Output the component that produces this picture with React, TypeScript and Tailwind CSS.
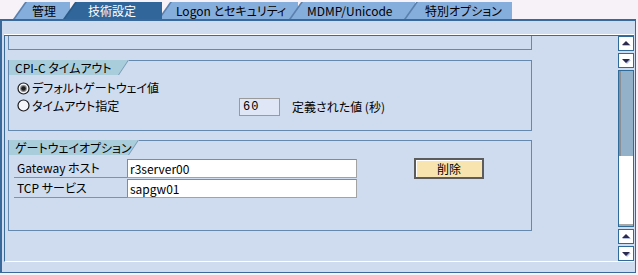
import React from 'react';

const slantLeft = '[clip-path:polygon(12px_0,100%_0,100%_100%,0_100%)]';

const Tab: React.FC<{ label: string; className: string; pad: string; active?: boolean }> = ({ label, className, pad, active }) => (
  <div className={`${className} h-[17px] flex ${active ? 'bg-[#2a5a88] z-10' : 'bg-[#5a80ad]'} ${slantLeft}`}>
    <div
      className={`flex-1 ml-[2px] flex items-center ${pad} text-[12px] leading-none ${slantLeft} ${
        active ? 'bg-[#30669a] text-white' : 'bg-[#86aedd] text-black'
      }`}
    >
      <span className="whitespace-nowrap">{label}</span>
    </div>
  </div>
);

const GroupLabel: React.FC<{ label: string; width: string }> = ({ label, width }) => (
  <div className={`${width} h-full flex bg-[#7899b6] [clip-path:polygon(0_0,100%_0,calc(100%-10px)_100%,0_100%)]`}>
    <div className="flex-1 mr-[1px] bg-[#aacddc] flex items-center pl-[6px] text-[12px] leading-none [clip-path:polygon(0_0,100%_0,calc(100%-10px)_100%,0_100%)]">
      <span className="whitespace-nowrap">{label}</span>
    </div>
  </div>
);

const Radio: React.FC<{ checked?: boolean }> = ({ checked }) => (
  <svg width="13" height="13" viewBox="0 0 13 13" className="shrink-0">
    <circle cx="6.5" cy="6.5" r="5.5" fill="#f4f6fb" stroke="#1a1a1a" strokeWidth="1.2" />
    {checked && <circle cx="6.5" cy="6.5" r="3.4" fill="#8a8a8a" />}
    {checked && <circle cx="6.5" cy="6.5" r="2.3" fill="#1e1e1e" />}
  </svg>
);

const ScrollBtn: React.FC<{ dir: 'up' | 'down' }> = ({ dir }) => (
  <div className="h-[15px] w-[16px] border border-[#2f6a98] bg-white flex items-center justify-center">
    <svg width="14" height="13" viewBox="0 0 14 13">
      {dir === 'up' ? (
        <>
          <polygon points="3,9 12,9 7.5,5" fill="#b4bfe2" />
          <polygon points="3,8 11,8 7,4" fill="#2b2b4f" />
        </>
      ) : (
        <>
          <polygon points="4,6 12,6 8,10" fill="#b4bfe2" />
          <polygon points="3,5 11,5 7,9" fill="#2b2b4f" />
        </>
      )}
    </svg>
  </div>
);

const App: React.FC = () => {
  return (
    <div className="w-[638px] h-[275px] overflow-hidden bg-[#f7f2f7] font-['Noto_Sans_CJK_JP',sans-serif] [font-feature-settings:'palt'] text-black">
      {/* tabs */}
      <div className="h-[19px] flex items-end pl-[13px]">
        <Tab label="管理" className="w-[57px]" pad="pl-[17px]" />
        <Tab label="技術設定" className="w-[99px] -ml-[7px]" pad="pl-[23px]" active />
        <Tab label="Logon とセキュリティ" className="w-[140px] -ml-[4px]" pad="pl-[16px]" />
        <Tab label="MDMP/Unicode" className="w-[126px] -ml-[9px]" pad="pl-[16px]" />
        <Tab label="特別オプション" className="w-[108px] -ml-[11px]" pad="pl-[19px]" />
      </div>

      {/* frame */}
      <div className="w-[636px] h-[254px] bg-[#cfdbee] border-[#39699a] border-t-2 border-l-2 border-r border-b pl-[2px] pt-[14px] pb-[10px]">
        <div className="w-[630px] h-[227px] flex border-t border-l border-[#3b6b99] border-b border-b-white shadow-[0_-1px_0_#ffffff]">
          {/* content */}
          <div className="w-[613px] h-full overflow-hidden text-[12px] leading-none">
            {/* scrolled-off group */}
            <div className="ml-[3px] w-[524px] h-[14px] border-l border-r border-b border-[#6489ae]" />

            {/* CPI-C */}
            <div className="ml-[3px] mt-[10px] w-[524px] h-[71px] border-l border-r border-b border-[#6489ae] flex flex-col">
              <div className="h-[15px] flex">
                <GroupLabel label="CPI-C タイムアウト" width="w-[120px]" />
                <div className="flex-1 border-t border-[#6489ae]" />
              </div>
              <div className="pl-[8px] pt-[4px] flex flex-col gap-[1px]">
                <div className="h-[18px] flex items-center">
                  <Radio checked />
                  <span className="ml-[2px]">デフォルトゲートウェイ値</span>
                </div>
                <div className="h-[18px] flex items-center">
                  <div className="w-[222px] flex items-center -mt-[3px]">
                    <Radio />
                    <span className="ml-[2px]">タイムアウト指定</span>
                  </div>
                  <div className="w-[41px] h-[18px] bg-[#dfe7f7] border border-[#9a9a9a] flex items-center pl-[3px] font-['Liberation_Mono',monospace] text-[12px] tracking-[1px]">
                    60
                  </div>
                  <span className="ml-[12px]">定義された値 (秒)</span>
                </div>
              </div>
            </div>

            {/* Gateway options */}
            <div className="ml-[3px] mt-[9px] w-[524px] h-[91px] border-l border-r border-b border-[#6489ae] flex flex-col">
              <div className="h-[15px] flex">
                <GroupLabel label="ゲートウェイオプション" width="w-[130px]" />
                <div className="flex-1 border-t border-[#6489ae]" />
              </div>
              <div className="pt-[3px] ml-[5px] flex flex-col">
                <div className="h-[20px] flex items-start">
                  <div className="w-[113px] h-[20px] border-b border-[#8f8f8f] flex items-center pl-[3px]">Gateway ホスト</div>
                  <div className="w-[230px] h-[19px] mt-[1px] bg-white border border-[#a3a3a3] border-t-[#8a8a8a] border-l-[#8a8a8a] flex items-center pl-[2px]">
                    r3server00
                  </div>
                  <button className="ml-[57px] w-[70px] h-[21px] bg-[#f8e4ae] border-2 border-[#5c5c5c] shadow-[inset_1px_1px_0_#ffffff] flex items-center justify-center text-[12px] leading-none">
                    削除
                  </button>
                </div>
                <div className="h-[20px] flex items-start">
                  <div className="w-[113px] h-[20px] border-b border-[#8f8f8f] flex items-center pl-[3px]">TCP サービス</div>
                  <div className="w-[230px] h-[19px] mt-[1px] bg-white border border-[#a3a3a3] border-t-[#8a8a8a] border-l-[#8a8a8a] flex items-center pl-[2px]">
                    sapgw01
                  </div>
                </div>
              </div>
            </div>
          </div>

          {/* scrollbar */}
          <div className="w-[16px] flex flex-col">
            <ScrollBtn dir="up" />
            <div className="mt-[2px]">
              <ScrollBtn dir="down" />
            </div>
            <div className="mt-[2px] h-[157px] border border-[#2f6a98] bg-white flex flex-col">
              <div className="h-[85px] bg-[#93b1c8] border-l-2 border-[#8a8f96]" />
              <div className="flex-1 border-b-2 border-[#a8a8a8]" />
            </div>
            <div className="mt-[2px]">
              <ScrollBtn dir="up" />
            </div>
            <div className="mt-[2px]">
              <ScrollBtn dir="down" />
            </div>
          </div>
        </div>
      </div>
    </div>
  );
};

export default App;
